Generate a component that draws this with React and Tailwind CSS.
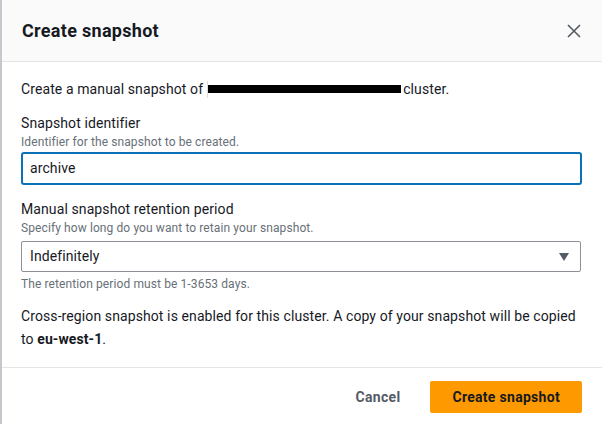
const App = () => {
  return (
    <div
      className="w-[602px] h-[424px] overflow-hidden bg-white border-l-2 border-[#c6c6cd] text-[#16191f]"
      style={{ fontFamily: 'Roboto, "Noto Sans", sans-serif' }}
    >
      <div className="h-[62px] bg-[#fafafa] border-b border-[#e4e4e7] flex items-center justify-between pl-[20px] pr-[21px]">
        <h2 className="text-[18px] font-bold tracking-[0.3px]">Create snapshot</h2>
        <button className="text-[#545b64]">
          <svg width="14" height="14" viewBox="0 0 14 14" fill="none" stroke="currentColor" strokeWidth="1.6">
            <path d="M1 1l12 12M13 1L1 13" />
          </svg>
        </button>
      </div>

      <div className="pl-[19px] pr-[21px] pt-[17px] h-[306px] border-b border-[#e4e4e7] text-[14px] tracking-[0.1px]">
        <p className="flex items-center h-[20px]">
          Create a manual snapshot of
          <span className="ml-[4px] w-px h-[17px] bg-[#dddddd]" />
          <span className="w-[193px] h-[8px] bg-black" />
          <span className="ml-[2px]">cluster.</span>
        </p>

        <div className="mt-[14px]">
          <label className="block leading-[20px]">Snapshot identifier</label>
          <p className="text-[12px] text-[#687078] leading-[16px] mt-[1px]">Identifier for the snapshot to be created.</p>
          <div className="mt-[2px] mr-[-1px] h-[33px] border-2 border-[#0a70b8] rounded-[3px] flex items-center px-[7px]">
            archive
          </div>
        </div>

        <div className="mt-[14px]">
          <label className="block leading-[20px]">Manual snapshot retention period</label>
          <p className="text-[12px] text-[#687078] leading-[16px] mt-[1px]">Specify how long do you want to retain your snapshot.</p>
          <div className="mt-[5px] h-[31px] border border-[#8d9096] rounded-[2px] flex items-center justify-between pl-[8px] pr-[11px]">
            <span>Indefinitely</span>
            <svg width="10" height="8" viewBox="0 0 10 8">
              <path d="M0 0h10L5 8z" fill="#545b64" />
            </svg>
          </div>
          <p className="text-[12px] text-[#687078] leading-[16px] mt-[4px]">The retention period must be 1-3653 days.</p>
        </div>

        <p className="mt-[13px] leading-[23px] pr-[2px]">
          Cross-region snapshot is enabled for this cluster. A copy of your snapshot will be copied to{' '}
          <b>eu-west-1</b>.
        </p>
      </div>

      <div className="flex items-center justify-end gap-[30px] pr-[20px] pt-[13px]">
        <button className="text-[14px] font-bold text-[#545b64] tracking-[0.3px]">Cancel</button>
        <button className="h-[32px] px-[22px] bg-[#ff9900] rounded-[2px] text-[14px] font-bold text-[#16191f] tracking-[0.3px]">
          Create snapshot
        </button>
      </div>
    </div>
  );
};

export default App;
